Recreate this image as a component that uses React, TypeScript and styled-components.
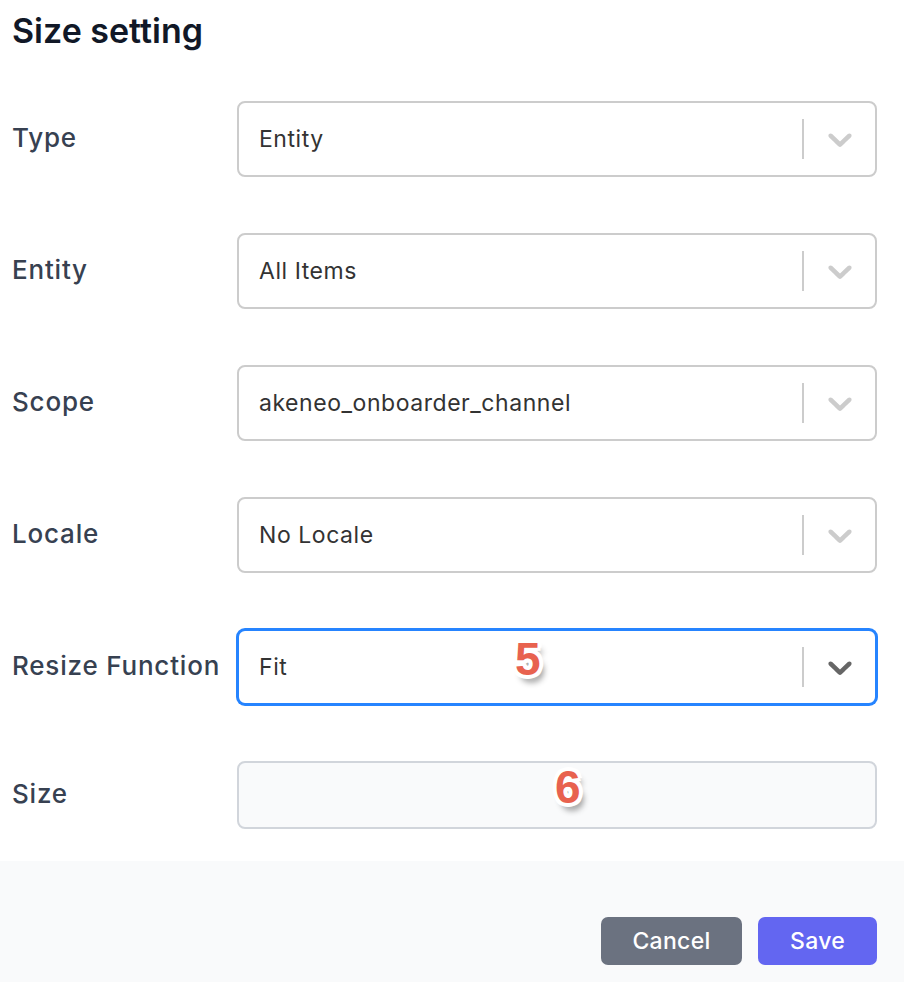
import React from "react";
import styled, { createGlobalStyle } from "styled-components";

const Global = createGlobalStyle`
  html, body { margin: 0; padding: 0; background: #ffffff; }
  body { font-family: Inter, "Noto Sans", sans-serif; -webkit-font-smoothing: antialiased; }
  * { box-sizing: border-box; }
`;

const Page = styled.div`
  width: 904px;
  min-height: 982px;
  display: flex;
  flex-direction: column;
  background: #ffffff;
`;

const Body = styled.div`
  padding: 10px 27px 32px 12px;
`;

const Title = styled.h1`
  margin: 0;
  height: 91px;
  font-size: 34px;
  line-height: 42px;
  font-weight: 600;
  color: #111827;
  letter-spacing: 0;
`;

const Form = styled.div`
  display: flex;
  flex-direction: column;
  gap: 56px;
`;

const Row = styled.div`
  display: grid;
  grid-template-columns: 225px 1fr;
  align-items: center;
`;

const Label = styled.label`
  font-size: 26px;
  font-weight: 500;
  letter-spacing: 0.8px;
  color: #374151;
  margin-top: -4px;
  white-space: nowrap;
`;

const FieldWrap = styled.div`
  position: relative;
`;

const SelectBox = styled.div<{ $focused?: boolean }>`
  height: 76px;
  display: flex;
  align-items: center;
  background: #fff;
  border: 2px solid ${(p) => (p.$focused ? "#2684ff" : "#cccccc")};
  box-shadow: ${(p) => (p.$focused ? "0 0 0 1px #2684ff" : "none")};
  border-radius: 8px;
`;

const Value = styled.div`
  flex: 1;
  padding-left: 20px;
  font-size: 23px;
  color: #333333;
  letter-spacing: 0.55px;
`;

const Separator = styled.span`
  width: 2px;
  height: 40px;
  background: #cccccc;
`;

const Indicator = styled.div<{ $focused?: boolean }>`
  width: 71px;
  height: 40px;
  display: flex;
  align-items: center;
  justify-content: center;
  color: ${(p) => (p.$focused ? "#666666" : "#cccccc")};
`;

const TextInput = styled.div`
  height: 68px;
  background: #f9fafb;
  border: 2px solid #d1d5db;
  border-radius: 8px;
`;

const Badge = styled.span<{ $left: number; $top: number }>`
  position: absolute;
  left: ${(p) => p.$left}px;
  top: ${(p) => p.$top}px;
  font-family: "Liberation Sans", Arial, sans-serif;
  font-weight: 700;
  font-size: 46px;
  line-height: 46px;
  color: #e8624f;
  text-shadow:
    4px 0 0 #fff, -4px 0 0 #fff, 0 4px 0 #fff, 0 -4px 0 #fff,
    3px 3px 0 #fff, -3px -3px 0 #fff, 3px -3px 0 #fff, -3px 3px 0 #fff,
    4px 7px 6px rgba(0, 0, 0, 0.45);
`;

const Footer = styled.div`
  flex: 1;
  background: #f9fafb;
  display: flex;
  justify-content: flex-end;
  align-items: flex-start;
  gap: 16px;
  padding: 56px 27px 17px 0;
`;

const Button = styled.button<{ $variant: "cancel" | "save" }>`
  height: 48px;
  width: ${(p) => (p.$variant === "cancel" ? "141px" : "119px")};
  padding: 0;
  border: none;
  border-radius: 7px;
  font-family: Inter, sans-serif;
  font-size: 23px;
  font-weight: 500;
  letter-spacing: 0.3px;
  color: #ffffff;
  background: ${(p) => (p.$variant === "cancel" ? "#6b7280" : "#6366f1")};
`;

const Chevron = () => (
  <svg width="40" height="40" viewBox="0 0 20 20" fill="currentColor" aria-hidden="true">
    <path d="M4.516 7.548c0.436-0.446 1.043-0.481 1.576 0l3.908 3.747 3.908-3.747c0.533-0.481 1.141-0.446 1.574 0 0.436 0.445 0.408 1.197 0 1.615-0.406 0.418-4.695 4.502-4.695 4.502-0.217 0.223-0.502 0.335-0.787 0.335s-0.57-0.112-0.789-0.335c0 0-4.287-4.084-4.695-4.502s-0.436-1.17 0-1.615z" />
  </svg>
);

const Select = ({ value, focused }: { value: string; focused?: boolean }) => (
  <SelectBox $focused={focused}>
    <Value>{value}</Value>
    <Separator />
    <Indicator $focused={focused}>
      <Chevron />
    </Indicator>
  </SelectBox>
);

const selects = [
  { label: "Type", value: "Entity" },
  { label: "Entity", value: "All Items" },
  { label: "Scope", value: "akeneo_onboarder_channel" },
  { label: "Locale", value: "No Locale" },
];

export default function App() {
  return (
    <Page>
      <Global />
      <Body>
        <Title>Size setting</Title>
        <Form>
          {selects.map((s) => (
            <Row key={s.label}>
              <Label>{s.label}</Label>
              <FieldWrap>
                <Select value={s.value} />
              </FieldWrap>
            </Row>
          ))}
          <Row>
            <Label>Resize Function</Label>
            <FieldWrap>
              <Select value="Fit" focused />
              <Badge $left={278} $top={7}>5</Badge>
            </FieldWrap>
          </Row>
          <Row>
            <Label>Size</Label>
            <FieldWrap>
              <TextInput />
              <Badge $left={318} $top={3}>6</Badge>
            </FieldWrap>
          </Row>
        </Form>
      </Body>
      <Footer>
        <Button $variant="cancel">Cancel</Button>
        <Button $variant="save">Save</Button>
      </Footer>
    </Page>
  );
}
